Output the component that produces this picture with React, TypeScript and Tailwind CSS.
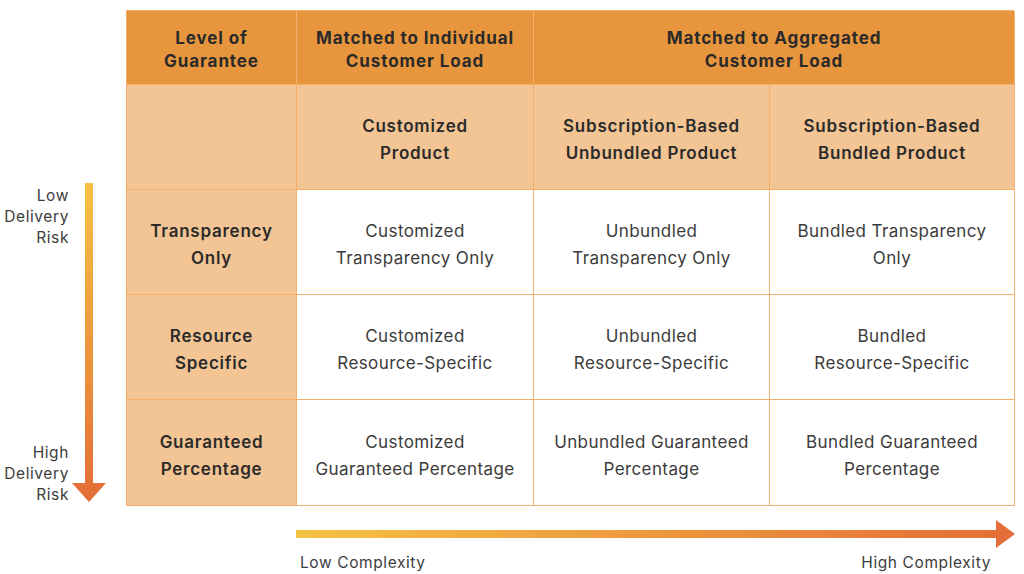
import React from "react";

const font = { fontFamily: '"Inter", "Noto Sans", sans-serif' };

function Cell({ children, className }: { children: React.ReactNode; className: string }) {
  return (
    <div className={"flex items-center justify-center text-center border-r border-b border-[#F2B06C] " + className}>
      {children}
    </div>
  );
}

const body = "bg-white text-[#3b3b3b] text-[17px] leading-[27px] tracking-[0.4px] font-normal pt-[6px]";
const sub = "bg-[#F3C594] text-[#2b2b2b] text-[17px] leading-[27px] tracking-[0.75px] font-semibold pt-[6px]";
const head = "bg-[#E8963D] text-[#2a2a2a] text-[17px] leading-[23px] tracking-[0.9px] font-bold pt-[4px]";

export default function App() {
  return (
    <div className="w-[1024px] h-[574px] bg-white overflow-hidden" style={font}>
      <div className="flex pt-[10px]">
        <div className="w-[126px] flex pt-[173px]">
          <div className="w-[69px] h-[320px] flex flex-col justify-between text-right text-[15.5px] leading-[21px] tracking-[0.6px] text-[#3d3d3d]">
            <div className="mt-[2px]">Low<br />Delivery<br />Risk</div>
            <div className="mb-[-2px]">High<br />Delivery<br />Risk</div>
          </div>
          <svg width="36" height="320" className="ml-[2px]" viewBox="0 0 36 320">
            <defs>
              <linearGradient id="vg" x1="0" y1="0" x2="0" y2="1">
                <stop offset="0" stopColor="#F5C243" />
                <stop offset="1" stopColor="#E46D38" />
              </linearGradient>
            </defs>
            <path d="M14 0 H22 V300 H35 L18 319 L1 300 H14 Z" fill="url(#vg)" />
          </svg>
        </div>
        <div
          className="grid w-[888px] border-l border-t border-[#F2B06C]"
          style={{ gridTemplateColumns: "170px 237px 236px 245px", gridTemplateRows: "74px 105px 105px 105px 106px" }}
        >
          <Cell className={head}>Level of<br />Guarantee</Cell>
          <Cell className={head}>Matched to Individual<br />Customer Load</Cell>
          <Cell className={head + " col-span-2"}>Matched to Aggregated<br />Customer Load</Cell>

          <Cell className={sub}>{""}</Cell>
          <Cell className={sub}>Customized<br />Product</Cell>
          <Cell className={sub}>Subscription-Based<br />Unbundled Product</Cell>
          <Cell className={sub}>Subscription-Based<br />Bundled Product</Cell>

          <Cell className={sub}>Transparency<br />Only</Cell>
          <Cell className={body}>Customized<br />Transparency Only</Cell>
          <Cell className={body}>Unbundled<br />Transparency Only</Cell>
          <Cell className={body}>Bundled Transparency<br />Only</Cell>

          <Cell className={sub}>Resource<br />Specific</Cell>
          <Cell className={body}>Customized<br />Resource-Specific</Cell>
          <Cell className={body}>Unbundled<br />Resource-Specific</Cell>
          <Cell className={body}>Bundled<br />Resource-Specific</Cell>

          <Cell className={sub}>Guaranteed<br />Percentage</Cell>
          <Cell className={body}>Customized<br />Guaranteed Percentage</Cell>
          <Cell className={body}>Unbundled Guaranteed<br />Percentage</Cell>
          <Cell className={body}>Bundled Guaranteed<br />Percentage</Cell>
        </div>
      </div>
      <div className="ml-[296px] w-[720px] mt-[10px]">
        <svg width="720" height="36" viewBox="0 0 720 36">
          <defs>
            <linearGradient id="hg" x1="0" y1="0" x2="1" y2="0">
              <stop offset="0" stopColor="#F5C243" />
              <stop offset="1" stopColor="#E46D38" />
            </linearGradient>
          </defs>
          <path d="M0 14 H700 V4 L719 18 L700 32 V22 H0 Z" fill="url(#hg)" />
        </svg>
        <div className="flex justify-between w-[691px] ml-[4px] text-[15.5px] leading-[21px] tracking-[0.6px] text-[#3d3d3d] mt-[0px]">
          <span>Low Complexity</span>
          <span>High Complexity</span>
        </div>
      </div>
    </div>
  );
}
